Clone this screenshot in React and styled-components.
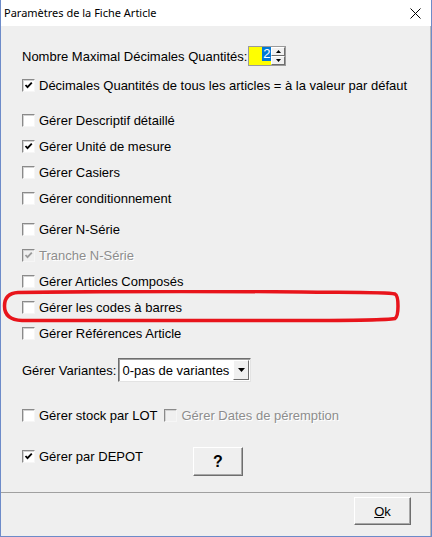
import React from 'react';
import styled, { createGlobalStyle } from 'styled-components';

const Global = createGlobalStyle`
  html, body { margin: 0; padding: 0; background: #efefef; }
  #root { width: 432px; height: 537px; }
`;

const Window = styled.div`
  position: relative;
  box-sizing: border-box;
  width: 432px;
  height: 537px;
  display: flex;
  flex-direction: column;
  border: 1px solid #6d8bc9;
  border-top: none;
  background: #efefef;
  font-family: "Liberation Sans", Arial, sans-serif;
  font-size: 13px;
  color: #000;
`;

const TitleBar = styled.div`
  height: 26px;
  flex: none;
  background: #fff;
  display: flex;
  align-items: center;
  padding: 0 10px 0 3px;
  font-family: "Noto Sans", sans-serif;
  font-size: 11px;
  color: #000;
`;

const TitleText = styled.span`
  flex: 1;
  padding-bottom: 1px;
`;

const Body = styled.div`
  flex: 1;
  display: flex;
  flex-direction: column;
  padding: 17px 0 0 21px;
  border-right: 1px solid #b9b9b9;
`;

const Row = styled.div`
  display: flex;
  align-items: ${p => (p.$top ? 'flex-start' : 'center')};
  height: ${p => p.$h || 26}px;
  margin-top: ${p => p.$gap || 0}px;
  flex: none;
`;

const Label = styled.label`
  display: flex;
  align-items: center;
  height: 18px;
  white-space: nowrap;
  color: ${p => (p.$disabled ? '#8d8d8d' : '#000')};
  text-shadow: ${p => (p.$disabled ? '1px 1px 0 #fff' : 'none')};
  width: ${p => (p.$w ? `${p.$w}px` : 'auto')};
  margin-left: ${p => p.$ml || 0}px;
`;

const Box = styled.span`
  box-sizing: border-box;
  width: 13px;
  height: 13px;
  margin-right: 4px;
  flex: none;
  display: flex;
  align-items: center;
  justify-content: center;
  background: ${p => (p.$disabled ? '#f0f0f0' : '#fff')};
  border: 1px solid;
  border-color: #8a8a8a #f6f6f6 #f6f6f6 #8a8a8a;
  box-shadow: inset 1px 1px 0 #d2d2d2;
`;

const Check = ({ checked, disabled }) => (
  <Box $disabled={disabled}>
    {checked && (
      <svg width="9" height="9" viewBox="0 0 9 9">
        <path d="M1.5 4 L3.5 6.2 L7.8 1.6" fill="none" stroke={disabled ? '#9a9a9a' : '#000'} strokeWidth="1.8" />
      </svg>
    )}
  </Box>
);

const CheckRow = ({ label, checked, disabled, w, ml }) => (
  <Label $disabled={disabled} $w={w} $ml={ml}>
    <Check checked={checked} disabled={disabled} />
    {label}
  </Label>
);

const Spinner = styled.div`
  display: flex;
  height: 18px;
  margin-left: 1px;
  border: 1px solid #9a9a9a;
`;

const SpinField = styled.div`
  width: 22px;
  background: #ffff00;
  display: flex;
  justify-content: flex-end;
  align-items: flex-start;
`;

const Selected = styled.span`
  background: #0078d7;
  color: #fff;
  line-height: 14px;
  padding: 0 1px;
`;

const SpinButtons = styled.div`
  display: flex;
  flex-direction: column;
  width: 14px;
`;

const SpinBtn = styled.div`
  flex: 1;
  background: #f0f0f0;
  border: 1px solid;
  border-color: #fff #6e6e6e #6e6e6e #fff;
  display: flex;
  align-items: center;
  justify-content: center;
`;

const Arrow = ({ up, size = 3 }) => (
  <svg width={size * 2 + 1} height={size + 1} viewBox={`0 0 ${size * 2 + 1} ${size + 1}`}>
    <path d={up ? `M0 ${size + 1} L${size + 0.5} 0 L${size * 2 + 1} ${size + 1}Z` : `M0 0 L${size + 0.5} ${size + 1} L${size * 2 + 1} 0Z`} fill="#000" />
  </svg>
);

const Select = styled.div`
  box-sizing: border-box;
  display: flex;
  align-items: center;
  width: 133px;
  height: 24px;
  margin-left: 2px;
  background: #fff;
  border: 1px solid;
  border-color: #6e6e6e #e3e3e3 #e3e3e3 #6e6e6e;
  box-shadow: inset 1px 1px 0 #a0a0a0;
  padding-left: 3px;
  color: #000;
`;

const SelectText = styled.span`
  flex: 1;
`;

const SelectBtn = styled.div`
  box-sizing: border-box;
  width: 16px;
  height: 20px;
  margin-right: 1px;
  display: flex;
  align-items: center;
  justify-content: center;
  background: #f0f0f0;
  border: 1px solid;
  border-color: #fff #6e6e6e #6e6e6e #fff;
`;

const Button = styled.button`
  box-sizing: border-box;
  width: ${p => p.$w}px;
  height: ${p => p.$h}px;
  margin-left: ${p => p.$ml || 0}px;
  background: #efefef;
  border: 1px solid;
  border-color: #fff #6e6e6e #6e6e6e #fff;
  box-shadow: inset -1px -1px 0 #a8a8a8;
  font-family: "Liberation Sans", Arial, sans-serif;
  font-size: ${p => p.$fs || 13}px;
  font-weight: ${p => (p.$bold ? 700 : 400)};
  color: #000;
  padding: 0;
`;

const Spacer = styled.div`
  flex: 1;
`;

const Footer = styled.div`
  flex: none;
  height: 39px;
  display: flex;
  justify-content: flex-end;
  align-items: flex-start;
  padding: 4px 19px 0 0;
  border-top: 1px solid #a0a0a0;
  border-right: 1px solid #b9b9b9;
`;

const Annotation = styled.svg`
  position: absolute;
  left: 1px;
  top: 290px;
  pointer-events: none;
`;

export default function App() {
  return (
    <>
      <Global />
      <Window>
        <TitleBar>
          <TitleText>Paramètres de la Fiche Article</TitleText>
          <svg width="11" height="11" viewBox="0 0 11 11">
            <path d="M0.5 0.5 L10.5 10.5 M10.5 0.5 L0.5 10.5" stroke="#000" strokeWidth="1" />
          </svg>
        </TitleBar>
        <Body>
          <Row>
            <span>Nombre Maximal Décimales Quantités:</span>
            <Spinner>
              <SpinField><Selected>2</Selected></SpinField>
              <SpinButtons>
                <SpinBtn><Arrow up size={2} /></SpinBtn>
                <SpinBtn><Arrow size={2} /></SpinBtn>
              </SpinButtons>
            </Spinner>
          </Row>
          <Row $gap={3}>
            <CheckRow checked label="Décimales Quantités de tous les articles = à la valeur par défaut" />
          </Row>
          <Row $gap={9}><CheckRow label="Gérer Descriptif détaillé" /></Row>
          <Row><CheckRow checked label="Gérer Unité de mesure" /></Row>
          <Row><CheckRow label="Gérer Casiers" /></Row>
          <Row><CheckRow label="Gérer conditionnement" /></Row>
          <Row $gap={5}><CheckRow label="Gérer N-Série" /></Row>
          <Row><CheckRow checked disabled label="Tranche N-Série" /></Row>
          <Row><CheckRow label="Gérer Articles Composés" /></Row>
          <Row><CheckRow label="Gérer les codes à barres" /></Row>
          <Row><CheckRow label="Gérer Références Article" /></Row>
          <Row $gap={11}>
            <span>Gérer Variantes:</span>
            <Select>
              <SelectText>0-pas de variantes</SelectText>
              <SelectBtn><Arrow size={3} /></SelectBtn>
            </Select>
          </Row>
          <Row $gap={19}>
            <CheckRow label="Gérer stock par LOT" />
            <CheckRow disabled label="Gérer Dates de péremption" ml={7} />
          </Row>
          <Row $gap={19} $h={29} $top>
            <CheckRow checked label="Gérer par DEPOT" w={171} />
            <Button $w={50} $h={29} $fs={16} $bold>?</Button>
          </Row>
          <Spacer />
        </Body>
        <Footer>
          <Button $w={57} $h={28}><u>O</u>k</Button>
        </Footer>
        <Annotation width="400" height="33" viewBox="0 0 400 33">
          <path
            d="M16 2.5 C90 1.5 200 1 300 2 C350 2.5 385 2 393 4 C397 6 397 26 393 28.5 C380 31 330 30.5 260 30.5 C180 30.5 90 31 20 30.5 C8 30 2.5 25 2.5 16 C2.5 7 7 3 16 2.5 Z"
            fill="none"
            stroke="#e8141b"
            strokeWidth="3.5"
          />
        </Annotation>
      </Window>
    </>
  );
}
